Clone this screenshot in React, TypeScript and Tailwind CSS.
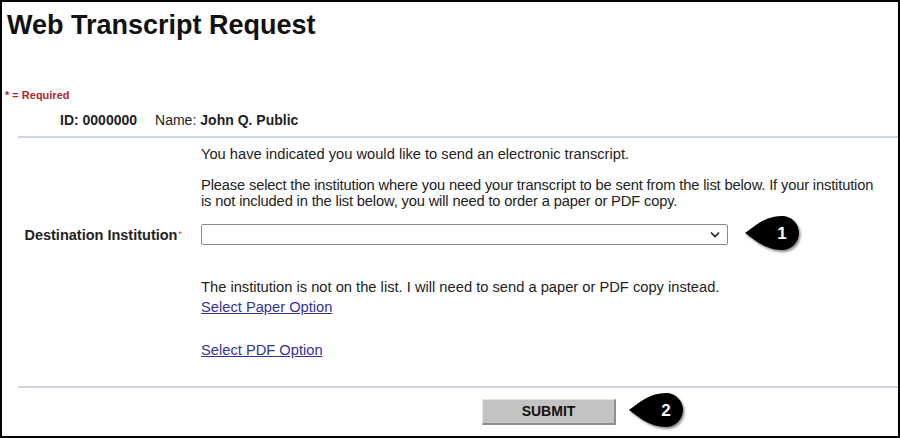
import React from 'react'

const font = { fontFamily: '"Liberation Sans", Arial, sans-serif' }

function Callout({ num }: { num: string }) {
  return (
    <svg width="60" height="40" viewBox="0 0 60 40" className="block">
      <defs>
        <filter id={`sh${num}`} x="-20%" y="-20%" width="150%" height="150%">
          <feDropShadow dx="1.5" dy="2" stdDeviation="1.2" floodColor="#000" floodOpacity="0.45" />
        </filter>
      </defs>
      <path
        d="M1 18 C 12 10, 22 1, 38 1 A 17 17 0 1 1 38 35 C 22 35, 12 26, 1 18 Z"
        fill="#000"
        filter={`url(#sh${num})`}
      />
      <text x="38" y="24" textAnchor="middle" fill="#fff" fontSize="17" fontWeight="bold" style={font}>
        {num}
      </text>
    </svg>
  )
}

export default function App() {
  return (
    <div style={font} className="w-[900px] h-[438px] bg-white border-2 border-black text-[#222] overflow-hidden">
      <h1 className="pl-[5px] pt-[8px] text-[27px] leading-[30px] font-bold text-[#111]">Web Transcript Request</h1>

      <p className="pl-[3px] mt-[49px] text-[11px] leading-[12px] font-bold text-[#b3262b]">* = Required</p>

      <div className="pl-[58px] mt-[10px] flex items-baseline text-[14px] leading-[18px]">
        <span className="font-bold">ID: 0000000</span>
        <span className="ml-[18px]">Name:</span>
        <span className="ml-[4px] font-bold">John Q. Public</span>
      </div>

      {/* divider */}
      <div className="ml-[16px] mt-[7px] h-[2px] bg-[#cdd6e2]" />

      <div className="grid grid-cols-[199px_1fr] text-[14.7px] leading-[16px]">
        <div />
        <div className="pt-[8px] whitespace-nowrap">
          <p>You have indicated you would like to send an electronic transcript.</p>
          <p className="mt-[15px] tracking-[-0.15px]">
            Please select the institution where you need your transcript to be sent from the list below. If your institution
            <br />
            is not included in the list below, you will need to order a paper or PDF copy.
          </p>
        </div>

        <div className="mt-[16px] flex items-center justify-end pr-[19px] text-[14.5px]">
          <span className="font-bold">Destination Institution</span>
          <span className="text-[#d33] text-[9px] self-start mt-[1px] ml-[1px]">*</span>
        </div>
        <div className="mt-[15px] flex items-center">
          <div className="w-[527px] h-[21px] border border-[#8a8a8a] rounded-[2px] bg-white flex items-center justify-end pr-[7px]">
            <svg width="10" height="7" viewBox="0 0 10 7">
              <path d="M1 1.5 L5 5.5 L9 1.5" fill="none" stroke="#222" strokeWidth="1.6" />
            </svg>
          </div>
          <div className="ml-[16px] -my-[10px]">
            <Callout num="1" />
          </div>
        </div>

        <div />
        <div className="mt-[34px] flex flex-col items-start">
          <p className="leading-[16px]">The institution is not on the list. I will need to send a paper or PDF copy instead.</p>
          <a href="#" className="mt-[4px] text-[#33339a] underline">Select Paper Option</a>
          <a href="#" className="mt-[27px] text-[#33339a] underline">Select PDF Option</a>
        </div>
      </div>

      <div className="ml-[16px] mt-[28px] h-[2px] bg-[#cdd6e2]" />

      <div className="mt-[11px] flex items-center pl-[480px]">
        <button className="w-[134px] h-[26px] bg-[#c3c3c3] border-t border-l border-[#e6e6e6] border-r-2 border-b-2 border-r-[#8e8e8e] border-b-[#8e8e8e] text-[14px] font-bold text-[#111]">
          SUBMIT
        </button>
        <div className="ml-[12px] -my-[8px]">
          <Callout num="2" />
        </div>
      </div>
    </div>
  )
}
